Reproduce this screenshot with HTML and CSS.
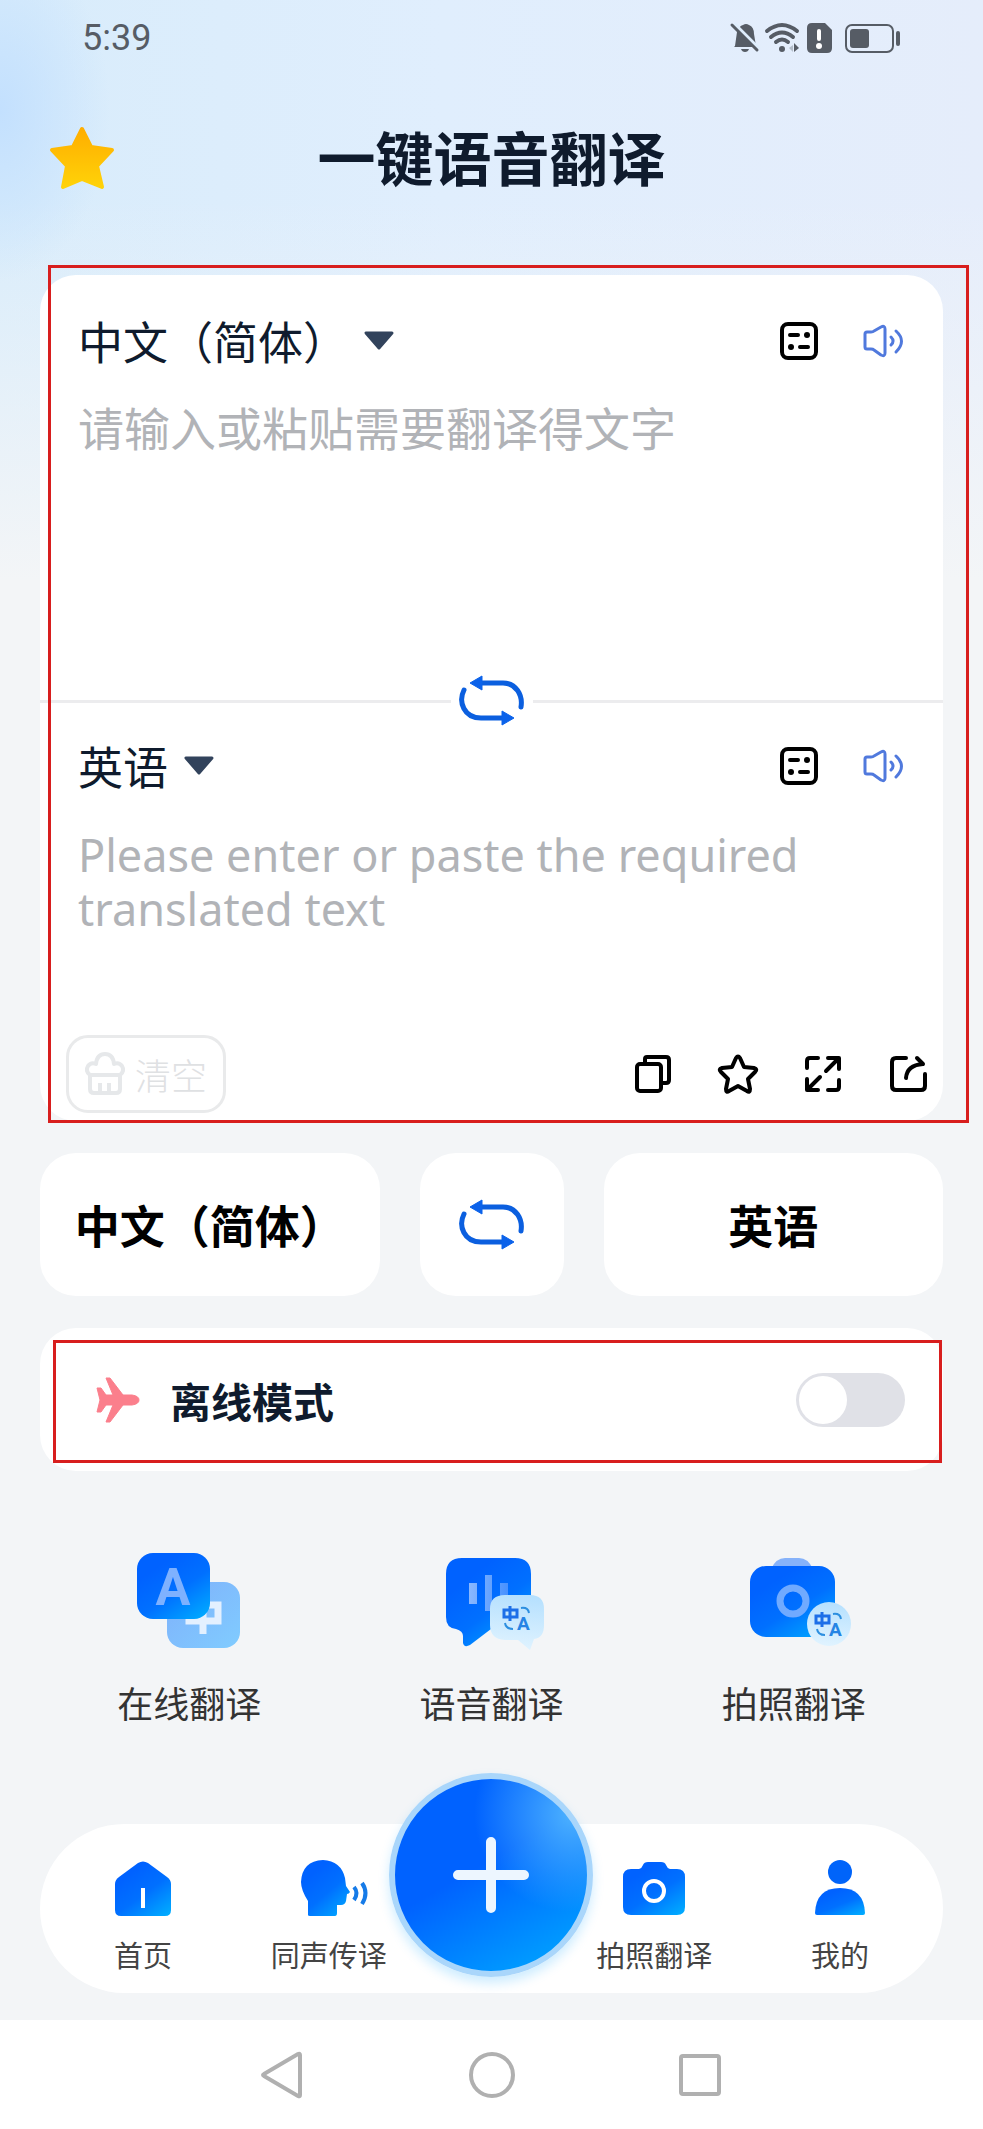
FILE: index.html
```
<!DOCTYPE html>
<html lang="zh-CN">
<head>
  <meta charset="UTF-8">
  <meta name="viewport" content="width=device-width, initial-scale=1.0">
  <title>一键语音翻译</title>
  <link rel="stylesheet" href="styles.css">
</head>
<body>
  <!-- Shared gradients and symbols -->
  <svg class="defs" width="0" height="0" aria-hidden="true">
    <defs>
      <linearGradient id="blue" x1="0.3" y1="0.2" x2="0.9" y2="1">
        <stop offset="0" stop-color="#0062ff"/>
        <stop offset="0.45" stop-color="#0070ff"/>
        <stop offset="1" stop-color="#00aaff"/>
      </linearGradient>
      <linearGradient id="pale" x1="0" y1="0" x2="1" y2="1">
        <stop offset="0" stop-color="#7fb0fb"/>
        <stop offset="1" stop-color="#80ccff"/>
      </linearGradient>
      <linearGradient id="ice" x1="0.6" y1="0" x2="0.5" y2="1">
        <stop offset="0" stop-color="#b5e0fe"/>
        <stop offset="1" stop-color="#e0f3ff"/>
      </linearGradient>
      <linearGradient id="gold" x1="0" y1="0" x2="0" y2="1">
        <stop offset="0" stop-color="#ffae00"/>
        <stop offset="1" stop-color="#ffd208"/>
      </linearGradient>
      <linearGradient id="glass" x1="0" y1="0" x2="1" y2="0">
        <stop offset="0" stop-color="#8ab8ff"/>
        <stop offset="1" stop-color="#4791ff"/>
      </linearGradient>
    </defs>
    <symbol id="swap" viewBox="0 0 66 52">
      <path d="M5 15C-1 27 5 43 22 43H46M62 32C64 20 57 8 44 8H20" fill="none" stroke="#0b5fdf" stroke-width="5" stroke-linecap="round"/>
      <path d="M11 8L23 1V15ZM55 43L43 36V50Z" fill="#0b62ea" stroke="#0b62ea" stroke-linejoin="round"/>
    </symbol>
    <symbol id="notes" viewBox="0 0 38 38">
      <rect x="2" y="2" width="34" height="34" rx="6" fill="none" stroke="#000" stroke-width="4"/>
      <path d="M10 13H18M20 25H28" stroke="#000" stroke-width="4" stroke-linecap="round"/>
      <circle cx="27" cy="13" r="3"/>
      <circle cx="11" cy="25" r="3"/>
    </symbol>
    <symbol id="speaker" viewBox="0 0 42 34">
      <path d="M4 8H8Q10 8 11 7L18 3Q22 1 22 5V29Q22 33 18 31L11 26Q10 25 8 25H4Q2 25 2 23V10Q2 8 4 8Z" fill="none" stroke="#5079dd" stroke-width="3" stroke-linejoin="round"/>
      <path d="M28 13Q32 17 28 21M33 7Q44 17 33 28" fill="none" stroke="#5079dd" stroke-width="3" stroke-linecap="round"/>
    </symbol>
    <symbol id="caret" viewBox="0 0 32 20">
      <path d="M3 2H29L16 17Z" fill="#32435c" stroke="#32435c" stroke-width="3" stroke-linejoin="round"/>
    </symbol>
    <symbol id="zh-a" viewBox="0 0 30 26">
      <path d="M2 5H15V12H2ZM8 1V16" fill="none" stroke="#1d6fe8" stroke-width="3"/>
      <path d="M19 3Q26 2 27 8M3 18Q4 24 11 24" fill="none" stroke="#2c8fe0" stroke-width="2"/>
    </symbol>
  </svg>

  <!-- Status Bar -->
  <header class="status-bar">
    <time>5:39</time>
    <div class="status-icons">
      <svg width="28" height="30" viewBox="0 0 28 30">
        <path d="M4 23L6 9Q8 3 12 2Q15 0 18 2Q23 4 23 11L25 23V24H3Z" fill="#565c65"/>
        <path d="M10 26H18Q17 29 14 29Q11 29 10 26Z" fill="#565c65"/>
        <path d="M3 1L28 26" stroke="#deedfc" stroke-width="4"/>
        <path d="M1 2L26 27" stroke="#565c65" stroke-width="3" stroke-linecap="round"/>
      </svg>
      <svg width="36" height="30" viewBox="0 0 36 30">
        <path d="M2 8Q17-4 32 8M6 14Q17 5 28 14M11 19Q17 14 23 19" fill="none" stroke="#565c65" stroke-width="4" stroke-linecap="round"/>
        <circle cx="17" cy="26" r="3" fill="#565c65"/>
        <path d="M28 22V29L24 25Z" fill="#b3bdc9"/>
        <path d="M29 20L34 25L29 29Z" fill="#565c65"/>
      </svg>
      <svg width="26" height="30" viewBox="0 0 26 30">
        <path d="M5 0H18L25 7V25Q25 30 20 30H5Q0 30 0 25V5Q0 0 5 0Z" fill="#565c65"/>
        <path d="M12 8V16" stroke="#fff" stroke-width="4" stroke-linecap="round"/>
        <circle cx="12" cy="23" r="3" fill="#fff"/>
      </svg>
      <svg class="battery" width="56" height="30" viewBox="0 0 56 30">
        <rect x="1" y="2" width="47" height="27" rx="6" fill="none" stroke="#565c65" stroke-width="2"/>
        <rect x="5" y="6" width="19" height="19" rx="3" fill="#565c65"/>
        <rect x="51" y="8" width="4" height="15" rx="2" fill="#565c65"/>
      </svg>
    </div>
  </header>

  <div class="title-bar">
    <button class="icon-btn" aria-label="收藏">
      <svg width="66" height="66" viewBox="0 0 66 66">
        <path d="M33 4L42 22L63 25L48 41L53 62L33 54L14 62L18 41L3 25L24 22Z" fill="url(#gold)" stroke="url(#gold)" stroke-width="4" stroke-linejoin="round"/>
      </svg>
    </button>
    <h1>一键语音翻译</h1>
  </div>

  <main class="content">
    <!-- Translator -->
    <section class="card translator">
      <div class="pane">
        <div class="pane-head">
          <label class="lang">
            <select aria-label="源语言"><option>中文（简体）</option></select>
            <svg width="32" height="20"><use href="#caret"/></svg>
          </label>
          <button class="icon-btn" aria-label="记录"><svg width="38" height="38"><use href="#notes"/></svg></button>
          <button class="icon-btn" aria-label="朗读"><svg width="42" height="34"><use href="#speaker"/></svg></button>
        </div>
        <textarea class="source" aria-label="原文" placeholder="请输入或粘贴需要翻译得文字"></textarea>
      </div>

      <div class="divider">
        <button class="icon-btn" aria-label="交换语言"><svg width="66" height="52"><use href="#swap"/></svg></button>
      </div>

      <div class="pane pane-bottom">
        <div class="pane-head">
          <label class="lang">
            <select aria-label="目标语言"><option>英语</option></select>
            <svg width="32" height="20"><use href="#caret"/></svg>
          </label>
          <button class="icon-btn" aria-label="记录"><svg width="38" height="38"><use href="#notes"/></svg></button>
          <button class="icon-btn" aria-label="朗读"><svg width="42" height="34"><use href="#speaker"/></svg></button>
        </div>
        <textarea class="target" aria-label="译文" placeholder="Please enter or paste the required translated text"></textarea>
      </div>

      <div class="actions">
        <button class="clear-btn">
          <svg width="40" height="44" viewBox="0 0 40 44">
            <path d="M5 23H35M5 23Q0 19 3 14Q6 10 11 12Q12 2 20 2Q28 2 29 12Q34 10 37 14Q40 19 35 23V37Q35 41 31 41H9Q5 41 5 37ZM15 31V40M24 31V40" fill="none" stroke="#e6e8ea" stroke-width="4" stroke-linejoin="round"/>
          </svg>
          清空
        </button>
        <button class="icon-btn" aria-label="复制">
          <svg width="40" height="40" viewBox="0 0 40 40">
            <rect x="4" y="10" width="24" height="27" rx="3"/>
            <path d="M12 10V5Q12 3 14 3H33Q36 3 36 6V26Q36 29 33 29H28"/>
          </svg>
        </button>
        <button class="icon-btn" aria-label="收藏">
          <svg width="40" height="40" viewBox="0 0 40 40">
            <path d="M18 4Q20 1 22 4L26 13L36 14Q40 15 37 18L30 25L32 35Q32 39 29 37L20 32L11 37Q8 39 8 35L10 25L3 18Q0 15 4 14L14 13Z"/>
          </svg>
        </button>
        <button class="icon-btn" aria-label="全屏">
          <svg width="40" height="40" viewBox="0 0 40 40">
            <path d="M4 14V7Q4 4 7 4H15M25 4H36V15M35 5L23 17M36 26V33Q36 36 33 36H25M15 36H4V25M5 35L17 23"/>
          </svg>
        </button>
        <button class="icon-btn" aria-label="分享">
          <svg width="40" height="40" viewBox="0 0 40 40">
            <path d="M18 4H8Q4 4 4 8V32Q4 36 8 36H33Q37 36 37 32V20M18 24Q19 11 35 10M29 4L35 10"/>
          </svg>
        </button>
      </div>
      <div class="mark"></div>
    </section>

    <!-- Language Pair -->
    <section class="pair">
      <button class="card">中文（简体）</button>
      <button class="card swap" aria-label="交换语言"><svg width="66" height="52"><use href="#swap"/></svg></button>
      <button class="card">英语</button>
    </section>

    <!-- Offline Mode -->
    <section class="card offline">
      <svg width="44" height="46" viewBox="0 0 44 46">
        <path d="M1 11H5L10 18H17L10 1H14L27 18H36Q43 19 43 23Q43 27 36 28H27L14 45H10L17 28H10L5 35H1L4 23Z" fill="#fb7f8c" stroke="#fb7f8c" stroke-linejoin="round"/>
      </svg>
      <label for="offline">离线模式</label>
      <input type="checkbox" id="offline" class="toggle">
      <div class="mark"></div>
    </section>

    <!-- Features -->
    <section class="features">
      <a href="#">
        <svg width="106" height="100" viewBox="1 0 106 100">
          <rect x="32" y="31" width="73" height="66" rx="16" fill="url(#pale)"/>
          <path d="M54 54H83V70H54ZM68 50V83" fill="none" stroke="#e3f0ff" stroke-width="7"/>
          <rect x="2" y="2" width="73" height="66" rx="16" fill="url(#blue)"/>
          <text x="38" y="54" class="big-a">A</text>
        </svg>
        在线翻译
      </a>
      <a href="#">
        <svg width="106" height="100" viewBox="-2 0 106 100">
          <path d="M22 7H75Q91 7 91 23V62Q91 78 75 78H51L30 94Q24 97 23 92V85Q23 80 16 78Q6 77 6 66V23Q6 7 22 7Z" fill="url(#blue)"/>
          <path d="M29 32H37V53H29ZM45 24H52V60H45ZM60 32H68V53H60Z" fill="url(#glass)"/>
          <path d="M65 44H90Q104 44 104 58V74Q104 87 94 88L90 99L78 89H65Q50 88 50 74V58Q50 44 65 44Z" fill="url(#ice)"/>
          <use href="#zh-a" x="62" y="54" width="30" height="26"/>
          <text x="77" y="79" class="tiny-a">A</text>
        </svg>
        语音翻译
      </a>
      <a href="#">
        <svg width="106" height="100" viewBox="-4 0 106 100">
          <path d="M26 18Q31 7 40 7H54Q63 7 68 18Z" fill="#86b2fa"/>
          <rect x="5" y="15" width="85" height="71" rx="16" fill="url(#blue)"/>
          <circle cx="48" cy="50" r="13" fill="none" stroke="#70aaff" stroke-width="7"/>
          <circle cx="84" cy="73" r="22" fill="url(#ice)"/>
          <use href="#zh-a" x="69" y="60" width="30" height="26"/>
          <text x="84" y="85" class="tiny-a">A</text>
        </svg>
        拍照翻译
      </a>
    </section>

    <!-- Tab Bar -->
    <nav class="card tabs">
      <a href="#">
        <svg width="60" height="60" viewBox="0 0 60 60">
          <path d="M25 4Q30 1 35 4L54 18Q58 21 58 25V51Q58 57 52 57H8Q2 57 2 51V25Q2 21 6 18Z" fill="url(#blue)"/>
          <rect x="28" y="29" width="4" height="20" fill="#fff"/>
        </svg>
        首页
      </a>
      <a href="#">
        <svg width="80" height="60" viewBox="-10 0 80 60">
          <path d="M9 56V42Q2 31 2 23Q3 2 24 1Q42 2 46 19L47 27L51 33Q50 35 48 35L47 42Q46 46 42 46H38V54Q38 57 36 57H11Q9 57 9 56Z" fill="url(#blue)"/>
          <path d="M55 28Q60 34 55 41M63 24Q70 34 63 45" fill="none" stroke="#167be8" stroke-width="4"/>
        </svg>
        同声传译
      </a>
      <div class="add-slot">
        <button class="add-btn" aria-label="新建">
          <svg width="80" height="80" viewBox="0 0 80 80">
            <path d="M40 7V73M7 40H73" stroke="#edf6ff" stroke-width="10" stroke-linecap="round"/>
          </svg>
        </button>
      </div>
      <a href="#">
        <svg width="64" height="60" viewBox="0 0 64 60">
          <path d="M9 10H17Q20 9 21 6Q22 3 26 3H39Q43 3 44 6Q45 9 48 10H55Q63 10 63 18V48Q63 56 55 56H9Q1 56 1 48V18Q1 10 9 10Z" fill="url(#blue)"/>
          <circle cx="32" cy="32" r="10" fill="none" stroke="#fff" stroke-width="4"/>
        </svg>
        拍照翻译
      </a>
      <a href="#">
        <svg width="60" height="60" viewBox="0 0 60 60">
          <circle cx="30" cy="13" r="12" fill="#0064fa"/>
          <path d="M5 54Q6 29 30 29Q54 29 55 54Q55 56 53 56H7Q5 56 5 54Z" fill="url(#blue)"/>
        </svg>
        我的
      </a>
    </nav>
  </main>

  <!-- System Navigation -->
  <footer class="system-nav">
    <button class="icon-btn" aria-label="返回">
      <svg width="48" height="48" viewBox="0 0 48 48"><path d="M40 4V44Q40 46 38 45L4 25Q2 24 4 23L38 3Q40 2 40 4Z"/></svg>
    </button>
    <button class="icon-btn" aria-label="主页">
      <svg width="48" height="48" viewBox="0 0 48 48"><circle cx="24" cy="24" r="21"/></svg>
    </button>
    <button class="icon-btn" aria-label="最近任务">
      <svg width="48" height="48" viewBox="0 0 48 48"><rect x="5" y="5" width="38" height="38" rx="2"/></svg>
    </button>
  </footer>
</body>
</html>
```
FILE: styles.css
```
/* General Styles */
* {
  box-sizing: border-box;
}
body {
  margin: 0;
  min-height: 100vh;
  display: flex;
  flex-direction: column;
  font-family: Roboto, "Noto Sans CJK SC", sans-serif;
  color: #0f1b2d;
  background:
    radial-gradient(110px 170px at 0 110px, #c3e0fe 0, rgba(195, 224, 254, 0) 100%),
    linear-gradient(to bottom, rgba(243, 245, 247, 0) 200px, #f3f5f7 580px),
    linear-gradient(to right, #d8ecfb, #e0eefd 45%, #e5edfb);
}
button,
select,
textarea {
  font: inherit;
  color: inherit;
  border: none;
  background: none;
  padding: 0;
  margin: 0;
}
button {
  cursor: pointer;
}
a {
  color: inherit;
  text-decoration: none;
}
svg {
  display: block;
  flex-shrink: 0;
  overflow: visible;
}
.defs {
  position: absolute;
}
.card {
  position: relative;
  background: #fff;
  border-radius: 36px;
}
.icon-btn {
  display: flex;
}

/* Status Bar */
.status-bar {
  display: flex;
  justify-content: space-between;
  align-items: center;
  height: 76px;
  padding: 0 82px;
  font-size: 36px;
  color: #565c65;
}
.status-icons {
  display: flex;
  gap: 6px;
}
.battery {
  margin-left: 6px;
}

/* Title */
.title-bar {
  display: grid;
  grid-template-columns: 66px 1fr 66px;
  align-items: center;
  height: 164px;
  padding: 0 49px;
}
h1 {
  margin: 0;
  padding-top: 6px;
  font-size: 58px;
  font-weight: 700;
  line-height: 80px;
  text-align: center;
}
.content {
  flex: 1;
  padding: 35px 40px 27px;
}

/* Translator */
.pane {
  padding: 39px 38px 0;
}
.pane-bottom {
  padding-top: 12px;
}
.pane-head {
  display: flex;
  align-items: center;
  gap: 45px;
  height: 54px;
}
.lang {
  display: flex;
  align-items: center;
  gap: 14px;
  margin-right: auto;
  font-size: 45px;
}
.lang select {
  appearance: none;
  padding-top: 8px;
  line-height: 54px;
}
textarea {
  display: block;
  width: 100%;
  resize: none;
  outline: none;
  font-size: 46px;
  line-height: 54px;
}
textarea::placeholder {
  color: #b1b3b7;
  opacity: 1;
}
.source {
  height: 272px;
  margin-top: 35px;
}
.target {
  height: 199px;
  margin-top: 35px;
  font-family: "Noto Sans", "Noto Sans CJK SC", sans-serif;
  font-size: 45px;
}
.divider {
  display: flex;
  align-items: center;
  gap: 8px;
  height: 52px;
}
.divider::before,
.divider::after {
  content: "";
  flex: 1;
  height: 3px;
  background: #ececee;
}
.actions {
  display: flex;
  align-items: center;
  gap: 45px;
  padding: 8px 15px 8px 26px;
}
.actions .icon-btn svg {
  fill: none;
  stroke: #000;
  stroke-width: 4;
  stroke-linecap: round;
  stroke-linejoin: round;
}
.clear-btn {
  display: flex;
  align-items: center;
  gap: 10px;
  height: 78px;
  margin-right: auto;
  padding: 0 16px;
  border: 3px solid #e9eaeb;
  border-radius: 22px;
  font-size: 36px;
  font-weight: 300;
  color: #dfe1e3;
}

/* Red highlight frames */
.mark {
  position: absolute;
  border: 3px solid #d81e1e;
  pointer-events: none;
}
.translator .mark {
  inset: -10px -26px -2px 8px;
}
.offline .mark {
  inset: 12px 1px 8px 13px;
}

/* Language Pair */
.pair {
  display: grid;
  grid-template-columns: 1fr 144px 1fr;
  gap: 40px;
  margin: 32px 0;
}
.pair .card {
  height: 143px;
  font-size: 45px;
  font-weight: 700;
  color: #000;
  white-space: nowrap;
}
.pair .swap {
  display: flex;
  align-items: center;
  justify-content: center;
}

/* Offline Mode */
.offline {
  display: flex;
  align-items: center;
  gap: 30px;
  height: 143px;
  padding: 0 38px 0 56px;
  font-size: 41px;
  font-weight: 700;
}
.toggle {
  appearance: none;
  width: 109px;
  height: 54px;
  margin: 0 0 0 auto;
  padding: 3px;
  border-radius: 27px;
  background: #e0e1e7;
  cursor: pointer;
}
.toggle::before {
  content: "";
  display: block;
  width: 48px;
  height: 48px;
  border-radius: 50%;
  background: #fff;
}
.toggle:checked {
  background: #0062ff;
}
.toggle:checked::before {
  margin-left: auto;
}

/* Features */
.features {
  display: grid;
  grid-template-columns: repeat(3, 1fr);
  margin: 0 -2px;
  padding-top: 80px;
}
.features a {
  display: flex;
  flex-direction: column;
  align-items: center;
  gap: 28px;
  font-size: 36px;
  line-height: 54px;
  color: #333;
}
.big-a {
  font: 700 52px Roboto, sans-serif;
  text-anchor: middle;
  fill: #7eb1ff;
}
.tiny-a {
  font: 700 19px Roboto, sans-serif;
  fill: #2584e4;
}

/* Tab Bar */
.tabs {
  display: grid;
  grid-template-columns: 206fr 166fr 160fr 166fr 206fr;
  height: 169px;
  margin-top: 91px;
  padding-top: 35px;
  border-radius: 85px;
}
.tabs a {
  display: flex;
  flex-direction: column;
  align-items: center;
  gap: 18px;
  font-size: 29px;
  line-height: 40px;
  color: #444;
  white-space: nowrap;
}
.add-slot {
  position: relative;
}
.add-btn {
  position: absolute;
  top: -86px;
  left: 50%;
  display: flex;
  align-items: center;
  justify-content: center;
  width: 204px;
  height: 204px;
  margin-left: -102px;
  border: 6px solid #a9d6fb;
  border-radius: 50%;
  background:
    radial-gradient(circle at 90% 20%, #4db2ff 0, rgba(77, 178, 255, 0) 40%),
    linear-gradient(150deg, #0062ff 45%, #00a2ff 90%);
  background-origin: border-box;
  box-shadow: 0 6px 12px rgba(0, 162, 255, 0.2);
}

/* System Navigation */
.system-nav {
  display: flex;
  justify-content: center;
  align-items: center;
  gap: 160px;
  height: 109px;
  background: #fff;
}
.system-nav svg {
  fill: none;
  stroke: #b0b0b0;
  stroke-width: 4;
}
```
